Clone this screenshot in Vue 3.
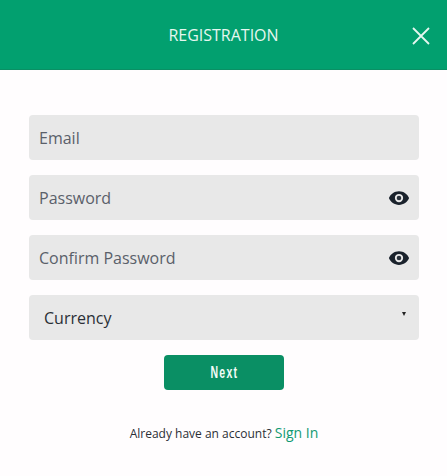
<template>
    <div class="modal">
        <header class="modalHeader">
            <h1 class="modalHeader_title">REGISTRATION</h1>
            <button class="closeBtn" type="button" aria-label="Close">
                <svg width="20" height="20" viewBox="0 0 20 20">
                    <path d="M2 2 L18 18 M18 2 L2 18" stroke="#e6f7f0" stroke-width="1.8" fill="none" />
                </svg>
            </button>
        </header>

        <form class="form" @submit.prevent>
            <input class="field" type="email" placeholder="Email" />

            <div v-for="item in passwordFields" :key="item" class="fieldWrap">
                <input class="field" type="password" :placeholder="item" />
                <svg class="eye" width="22" height="22" viewBox="0 0 24 24">
                    <path
                        fill="#1a222c"
                        fill-rule="evenodd"
                        d="M12 4.5C7 4.5 2.73 7.61 1 12c1.73 4.39 6 7.5 11 7.5s9.27-3.11 11-7.5c-1.73-4.39-6-7.5-11-7.5zM12 16.5a4.5 4.5 0 1 1 0-9 4.5 4.5 0 0 1 0 9z"
                    />
                    <circle cx="12" cy="12" r="2.5" fill="#2a323c" />
                </svg>
            </div>

            <div class="fieldWrap">
                <select class="field select">
                    <option>Currency</option>
                </select>
                <span class="caret"></span>
            </div>

            <button class="nextBtn" type="submit"><span class="nextBtn_label">Next</span></button>
        </form>

        <p class="signIn">
            Already have an account? <a class="signIn_link" href="#">Sign In</a>
        </p>
    </div>
</template>

<script setup>
const passwordFields = ["Password", "Confirm Password"];
</script>

<style>
body {
    background: #fff;
}
</style>

<style scoped>
.modal {
    width: 447px;
    height: 476px;
    background: #fffdfe;
    font-family: "Open Sans", sans-serif;
}

.modalHeader {
    height: 70px;
    box-sizing: border-box;
    background: #02a06f;
    border-bottom: 1px solid #0a8f64;
    display: flex;
    align-items: center;
    justify-content: center;
    position: relative;
}
.modalHeader_title {
    margin: 0;
    color: #e6f7f0;
    font-size: 16px;
    font-weight: 400;
}
.closeBtn {
    position: absolute;
    right: 16px;
    top: 26px;
    padding: 0;
    border: 0;
    background: none;
    display: flex;
}

.form {
    padding: 45px 28px 0 29px;
    display: flex;
    flex-direction: column;
    gap: 15px;
}
.fieldWrap {
    position: relative;
}
.field {
    display: block;
    width: 100%;
    height: 45px;
    box-sizing: border-box;
    border: 0;
    border-radius: 4px;
    background: #e8e8e8;
    padding: 0 10px;
    font-family: inherit;
    font-size: 16px;
    color: #5a606a;
    outline: none;
}
.field::placeholder {
    color: #5a606a;
    opacity: 1;
}
.select {
    appearance: none;
    padding: 0 15px;
    color: #2b2f36;
}
.eye {
    position: absolute;
    right: 9px;
    top: 12px;
}
.caret {
    position: absolute;
    right: 13px;
    top: 17px;
    border-left: 2px solid transparent;
    border-right: 2px solid transparent;
    border-top: 4px solid #222;
}

.nextBtn {
    align-self: center;
    width: 120px;
    height: 35px;
    border: 0;
    border-radius: 4px;
    background: #0a8f64;
    color: #f2fbf7;
    font-family: "Liberation Sans", sans-serif;
    font-size: 17px;
    font-weight: 700;
    letter-spacing: 2px;
}
/* no condensed face installed, so squeeze the bold one */
.nextBtn_label {
    display: inline-block;
    transform: scaleX(0.62);
}

.signIn {
    margin: 33px 0 0;
    padding-left: 1px;
    text-align: center;
    font-size: 12px;
    color: #2b2f36;
}
.signIn_link {
    color: #119a72;
    font-size: 14px;
    text-decoration: none;
}
</style>
